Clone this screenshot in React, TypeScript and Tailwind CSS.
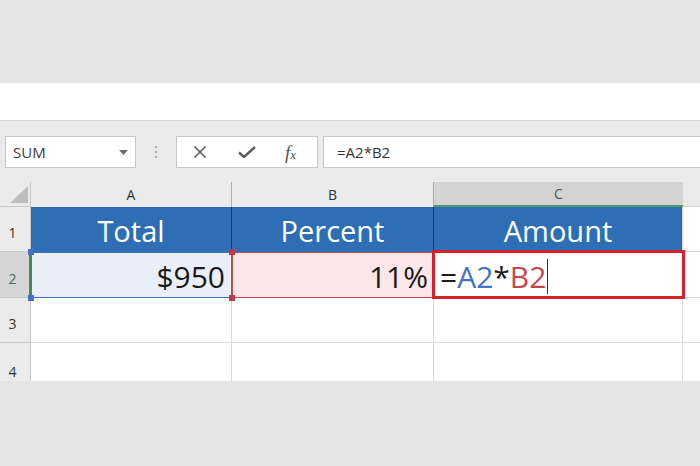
const font = { fontFamily: '"Open Sans", "Noto Sans", sans-serif' };

function Handle({ className }: { className: string }) {
  return <div className={`absolute w-[6px] h-[6px] z-20 ${className}`} />;
}

export default function App() {
  return (
    <div className="w-[700px] h-[466px] bg-[#e4e4e4] flex flex-col overflow-hidden" style={font}>
      <div className="h-[83px] bg-[#e4e4e4]" />
      <div className="h-[37px] bg-white" />

      {/* formula bar */}
      <div className="h-[62px] bg-[#ebebeb] border-t border-[#dadada] flex items-start pt-[15px]">
        <div className="ml-[5px] w-[131px] h-[32px] bg-white border border-[#c8c8c8] flex items-center justify-between pl-[7px] pr-[7px]">
          <span className="text-[15px] text-[#404040]">SUM</span>
          <svg width="9" height="5" viewBox="0 0 9 5"><polygon points="0,0 9,0 4.5,5" fill="#6d6d6d" /></svg>
        </div>
        <div className="w-[40px] h-[32px] flex flex-col items-center justify-center gap-[3px]">
          <span className="w-[2px] h-[2px] bg-[#a8a8a8]" />
          <span className="w-[2px] h-[2px] bg-[#a8a8a8]" />
          <span className="w-[2px] h-[2px] bg-[#a8a8a8]" />
        </div>
        <div className="w-[142px] h-[32px] bg-white border border-[#c8c8c8] flex items-center">
          <svg className="ml-[16px]" width="14" height="12" viewBox="0 0 14 12">
            <path d="M1.5 0.5 L12.5 11.5 M12.5 0.5 L1.5 11.5" stroke="#5e5e5e" strokeWidth="1.6" />
          </svg>
          <svg className="ml-[31px]" width="18" height="12" viewBox="0 0 18 12">
            <path d="M1 6.5 L6 11 L17 1" stroke="#5e5e5e" strokeWidth="2.4" fill="none" />
          </svg>
          <span className="ml-[29px] text-[19px] italic text-[#555] leading-none" style={{ fontFamily: '"Liberation Serif", serif' }}>
            f<span className="text-[13px]">x</span>
          </span>
        </div>
        <div className="ml-[5px] flex-1 h-[32px] bg-white border border-[#c8c8c8] border-r-0 flex items-center pl-[13px]">
          <span className="text-[15px] text-[#333]">=A2*B2</span>
        </div>
      </div>

      {/* sheet */}
      <div className="grid grid-cols-[31px_201px_202px_249px_1fr] grid-rows-[25px_45px_46px_45px_38px] bg-white">
        {/* column headers */}
        <div className="bg-[#ebebeb] border-r border-b border-[#c8c8c8] relative">
          <svg className="absolute left-[10px] top-[4px]" width="18" height="17" viewBox="0 0 18 17">
            <polygon points="0,17 18,17 18,0" fill="#bdbdbd" />
          </svg>
        </div>
        <div className="bg-[#ebebeb] border-r border-[#ababab] flex items-center justify-center text-[14px] font-medium text-[#333]">A</div>
        <div className="bg-[#ebebeb] border-r border-[#ababab] flex items-center justify-center text-[14px] font-medium text-[#333]">B</div>
        <div className="bg-[#d3d3d3] border-b-2 border-[#4e9a6f] flex items-center justify-center text-[14px] text-[#555]">C</div>
        <div className="bg-[#ebebeb] border-b border-[#d0d0d0]" />

        {/* row 1 */}
        <div className="bg-[#ebebeb] border-r border-b border-[#c8c8c8] flex items-end justify-center pr-[5px] pb-[8px] text-[14px] font-medium text-[#333]">1</div>
        <div className="bg-[#2e6eb4] border-r border-[#1d3a5e] flex items-end justify-center pb-[6px] text-[29px] leading-[30px] text-white">Total</div>
        <div className="bg-[#2e6eb4] border-r border-[#1d3a5e] flex items-end justify-center pb-[6px] text-[29px] leading-[30px] text-white">Percent</div>
        <div className="bg-[#2e6eb4] border-r border-[#d9d9d9] flex items-end justify-center pb-[6px] text-[29px] leading-[30px] text-white">Amount</div>
        <div className="border-b border-[#d9d9d9]" />

        {/* row 2 */}
        <div className="bg-[#d5d5d5] border-r-2 border-[#3f8a5c] border-b border-b-[#c8c8c8] flex items-end justify-center pr-[4px] pb-[8px] text-[14px] text-[#4a6a56]">2</div>
        <div className="relative bg-[#e9eff9] flex items-end justify-end pr-[7px] pb-[6px] text-[30px] leading-[30px] text-[#1a1a1a]">
          <div className="absolute inset-0 border border-[#4472c4] pointer-events-none" />
          <Handle className="-left-[3px] -top-[3px] bg-[#4472c4]" />
          <Handle className="-left-[3px] -bottom-[3px] bg-[#4472c4]" />
          $950
        </div>
        <div className="relative bg-[#fbe7e7] flex items-end justify-end pr-[6px] pb-[6px] text-[30px] leading-[30px] text-[#1a1a1a]">
          <div className="absolute inset-0 border border-[#c0504d] pointer-events-none" />
          <Handle className="-left-[3px] -top-[3px] bg-[#c0394a]" />
          <Handle className="-left-[3px] -bottom-[3px] bg-[#c0394a]" />
          11%
        </div>
        <div className="relative bg-white flex items-end pl-[6px] pb-[6px] text-[30px] leading-[30px] text-[#1a1a1a]">
          <div className="absolute -left-[2px] -top-[2px] -right-[2px] -bottom-[1px] border-[3px] border-[#d5212b] z-10 pointer-events-none" />
          <span>=</span>
          <span className="text-[#4472c4]">A2</span>
          <span>*</span>
          <span className="text-[#c8464b]">B2</span>
          <span className="inline-block w-px h-[35px] bg-[#333] mb-[-2px] ml-[1px]" />
        </div>
        <div className="border-b border-[#d9d9d9]" />

        {/* row 3 */}
        <div className="bg-[#ebebeb] border-r border-b border-[#c8c8c8] flex items-end justify-center pr-[5px] pb-[8px] text-[14px] font-medium text-[#333]">3</div>
        <div className="border-r border-b border-[#d9d9d9]" />
        <div className="border-r border-b border-[#d9d9d9]" />
        <div className="border-r border-b border-[#d9d9d9]" />
        <div className="border-b border-[#d9d9d9]" />

        {/* row 4 */}
        <div className="bg-[#ebebeb] border-r border-[#c8c8c8] flex items-end justify-center pr-[5px] text-[14px] font-medium text-[#333] leading-[18px]">4</div>
        <div className="border-r border-[#d9d9d9]" />
        <div className="border-r border-[#d9d9d9]" />
        <div className="border-r border-[#d9d9d9]" />
        <div />
      </div>

      <div className="flex-1 bg-[#e4e4e4]" />
    </div>
  );
}
